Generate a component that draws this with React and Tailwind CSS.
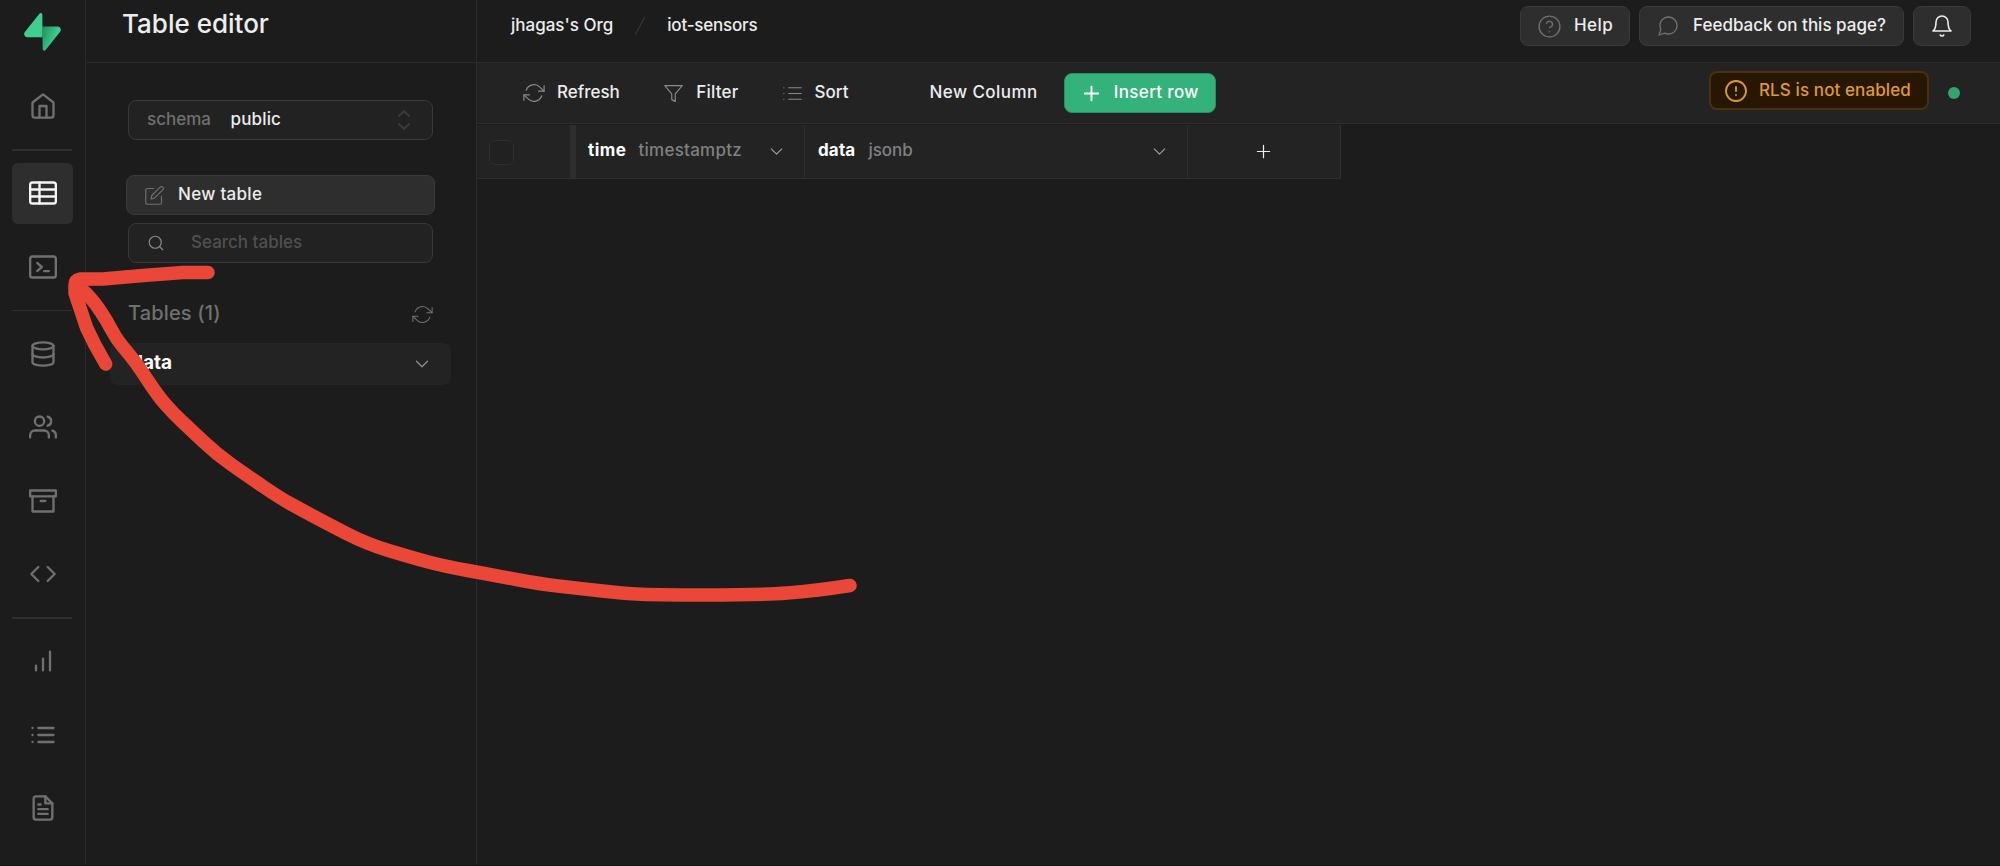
function Icon({ children, className = "", size = 28, sw = 2 }) {
  return (
    <svg width={size} height={size} viewBox="0 0 24 24" fill="none" stroke="currentColor" strokeWidth={sw} strokeLinecap="round" strokeLinejoin="round" className={`shrink-0 ${className}`}>
      {children}
    </svg>
  );
}

const glyphs = {
  home: <><path d="M3 9l9-7 9 7v11a2 2 0 0 1-2 2H5a2 2 0 0 1-2-2z" /><path d="M9 22V12h6v10" /></>,
  table: <><rect x="1" y="3" width="22" height="18" rx="2" /><path d="M1 9h22M1 15h22M9 3v18" /></>,
  terminal: <><rect x="1" y="3" width="22" height="18" rx="2" /><path d="M7 8.500l4 3.500-4 3.500M13 15.500h4" /></>,
  database: <><ellipse cx="12" cy="5" rx="9" ry="3" /><path d="M21 12c0 1.66-4 3-9 3s-9-1.34-9-3" /><path d="M3 5v14c0 1.66 4 3 9 3s9-1.34 9-3V5" /></>,
  users: <><path d="M17 21v-2a4 4 0 0 0-4-4H5a4 4 0 0 0-4 4v2" /><circle cx="9" cy="7" r="4" /><path d="M23 21v-2a4 4 0 0 0-3-3.87" /><path d="M16 3.13a4 4 0 0 1 0 7.75" /></>,
  archive: <><path d="M21 8v13H3V8" /><path d="M1 3h22v5H1z" /><path d="M10 12h4" /></>,
  code: <><path d="M16 18l6-6-6-6" /><path d="M8 6l-6 6 6 6" /></>,
  bars: <path d="M12 20V10M18 20V4M6 20v-4" />,
  list: <path d="M8 6h13M8 12h13M8 18h13M3 6h.01M3 12h.01M3 18h.01" />,
  file: <><path d="M14 2H6a2 2 0 0 0-2 2v16a2 2 0 0 0 2 2h12a2 2 0 0 0 2-2V8z" /><path d="M14 2v6h6M16 13H8M16 17H8M10 9H8" /></>,
  refresh: <><path d="M23 4v6h-6M1 20v-6h6" /><path d="M3.51 9a9 9 0 0 1 14.85-3.36L23 10M1 14l4.64 4.36A9 9 0 0 0 20.49 15" /></>,
  filter: <path d="M22 3H2l8 9.46V19l4 2v-8.54z" />,
  edit: <><path d="M11 4H4a2 2 0 0 0-2 2v14a2 2 0 0 0 2 2h14a2 2 0 0 0 2-2v-7" /><path d="M18.5 2.5a2.121 2.121 0 0 1 3 3L12 15l-4 1 1-4z" /></>,
  search: <><circle cx="11" cy="11" r="8" /><path d="M21 21l-4.35-4.35" /></>,
  down: <path d="M6 9l6 6 6-6" />,
  plus: <path d="M12 5v14M5 12h14" />,
  help: <><circle cx="12" cy="12" r="10" /><path d="M9.09 9a3 3 0 0 1 5.83 1c0 2-3 3-3 3M12 17h.01" /></>,
  message: <path d="M21 11.5a8.38 8.38 0 0 1-.9 3.8 8.5 8.5 0 0 1-7.6 4.7 8.38 8.38 0 0 1-3.8-.9L3 21l1.9-5.7a8.38 8.38 0 0 1-.9-3.8 8.5 8.5 0 0 1 4.7-7.6 8.38 8.38 0 0 1 3.8-.9h.5a8.48 8.48 0 0 1 8 8z" />,
  bell: <><path d="M18 8A6 6 0 0 0 6 8c0 7-3 9-3 9h18s-3-2-3-9" /><path d="M13.73 21a2 2 0 0 1-3.46 0" /></>,
  alert: <><circle cx="12" cy="12" r="10" /><path d="M12 8v4M12 16h.01" /></>,
};

function NavItem({ name, active }) {
  return (
    <div className={`flex h-[61px] w-[61px] shrink-0 items-center justify-center rounded-md pb-px pl-px ${active ? "bg-[#2e2e2e] text-[#f5f5f5]" : "text-[#707070]"}`}>
      <Icon>{glyphs[name]}</Icon>
    </div>
  );
}

function Sidebar() {
  return (
    <nav className="flex w-[86px] shrink-0 flex-col border-r border-[#2a2a2a] pl-3">
      <div className="flex h-[76px] shrink-0 pl-3 pt-[13px]">
        <svg width="37" height="38" viewBox="0 0 109 113" fill="none">
          <defs>
            <linearGradient id="bolt" x1="54" y1="55" x2="95" y2="72" gradientUnits="userSpaceOnUse">
              <stop stopColor="#249361" />
              <stop offset="1" stopColor="#3ecf8e" />
            </linearGradient>
          </defs>
          <path d="M63.7 110.3c-2.9 3.6-8.6 1.600-8.700-3L54 40.1h45.200c8.200 0 12.800 9.500 7.700 15.900z" fill="url(#bolt)" />
          <path d="M45.300 2.070c2.900-3.600 8.600-1.600 8.700 3L54.500 72.200H9.800c-8.200 0-12.800-9.500-7.700-15.900z" fill="#3ecf8e" />
        </svg>
      </div>
      <NavItem name="home" />
      <div className="my-3 h-0.5 w-[60px] shrink-0 bg-[#2e2e2e]" />
      <div className="flex flex-col gap-[12.5px]">
        <NavItem name="table" active />
        <NavItem name="terminal" />
        <div className="h-px w-[60px] bg-[#2e2e2e]" />
        <NavItem name="database" />
        <NavItem name="users" />
        <NavItem name="archive" />
        <NavItem name="code" />
        <div className="-mb-[0.5px] -mt-[0.5px] h-0.5 w-[60px] bg-[#2e2e2e]" />
        <NavItem name="bars" />
        <NavItem name="list" />
        <NavItem name="file" />
      </div>
    </nav>
  );
}

function TablePanel() {
  return (
    <aside className="flex w-[391px] shrink-0 flex-col border-r border-[#2a2a2a]">
      <div className="flex h-[63px] shrink-0 border-b border-[#2a2a2a] pl-9 pt-[7px]">
        <h1 className="text-[26px] leading-[33px] text-[#ededed]">Table editor</h1>
      </div>
      <div className="ml-[42px] mt-[37px] flex h-10 w-[305px] items-center rounded-lg border border-[#383838] bg-[#222222] pl-[18px] pr-[19px]">
        <span className="w-[83.5px] text-[#707070]">schema</span>
        <span className="flex-1 tracking-[0.15px] text-[#ededed]">public</span>
        <svg width="18" height="22" viewBox="0 0 18 22" fill="none" stroke="#3a3a3a" strokeWidth="2" strokeLinecap="round" strokeLinejoin="round">
          <path d="M4 7l5-5 5 5M4 15l5 5 5-5" />
        </svg>
      </div>
      <button className="ml-[40px] mt-[35px] flex h-10 w-[309px] items-center gap-[13px] rounded-lg border border-[#3a3a3a] bg-[#2e2e2e] pl-[17px] tracking-[0.3px] text-[#ededed]">
        <Icon size={21} sw={1.3} className="text-[#707070]">{glyphs.edit}</Icon>
        New table
      </button>
      <div className="ml-[42px] mt-2 flex h-10 w-[305px] items-center rounded-lg border border-[#383838] bg-[#222222] pl-[18px] text-[#505050]">
        <Icon size={18} sw={1.5} className="mr-[26px] text-[#8a8a8a]">{glyphs.search}</Icon>
        Search tables
      </div>
      <div className="mt-[34px] flex h-8 items-center justify-between pl-[42px] pr-[43px] text-[20px] tracking-[0.15px] text-[#707070]">
        Tables (1)
        <Icon size={21} sw={1.2} className="mt-0.5">{glyphs.refresh}</Icon>
      </div>
      <div className="ml-6 mt-[14px] flex h-[42px] w-[341px] items-center justify-between rounded-lg bg-[#232323] pl-[21px] pr-[18px] text-[19px] font-bold text-white">
        <span className="pb-0.5">data</span>
        <Icon size={22} sw={1.5} className="text-[#8a8a8a]">{glyphs.down}</Icon>
      </div>
    </aside>
  );
}

function TopBar() {
  return (
    <header className="flex h-[63px] shrink-0 items-start border-b border-[#2a2a2a] pl-[34px] pr-[29px] pt-1.5 text-[#ededed]">
      <div className="flex h-10 flex-1 items-center">
        <span>jhagas's Org</span>
        <svg width="10" height="18" viewBox="0 0 10 18" stroke="#3e3e3e" className="mx-[22px]"><path d="M0.500 17.500L9.500 0.500" /></svg>
        <span className="-tracking-[0.2px]">iot-sensors</span>
      </div>
      <div className="flex h-10 gap-[9px]">
        <button className="flex w-[110px] items-center gap-3 rounded-lg border border-[#3a3a3a] bg-[#2e2e2e] pl-4">
          <Icon size={25} sw={1.3} className="text-[#707070]">{glyphs.help}</Icon>
          <span className="tracking-[0.4px]">Help</span>
        </button>
        <button className="flex w-[265px] items-center gap-[13px] rounded-lg border border-[#3a3a3a] bg-[#2e2e2e] pl-4">
          <Icon size={24} sw={1.3} className="text-[#707070]">{glyphs.message}</Icon>
          <span>Feedback on this page?</span>
        </button>
        <button className="flex w-[58px] items-center justify-center rounded-lg border border-[#3a3a3a] bg-[#2e2e2e]">
          <Icon size={24} sw={1.6}>{glyphs.bell}</Icon>
        </button>
      </div>
    </header>
  );
}

function Toolbar() {
  return (
    <div className="flex h-[61px] shrink-0 items-start border-b border-[#2e2e2e] bg-[#232323] pl-[46px] text-[#ededed]">
      <div className="mt-[10px] flex h-10 flex-1 items-center">
        <Icon size={22} sw={1.3} className="mr-3 text-[#8a8a8a]">{glyphs.refresh}</Icon>
        <span>Refresh</span>
        <Icon size={21} sw={1.3} className="ml-[43px] mr-[12.5px] text-[#8a8a8a]">{glyphs.filter}</Icon>
        <span className="tracking-[0.2px]">Filter</span>
        <Icon size={23} sw={1.3} className="ml-[42px] mr-[11px] text-[#8a8a8a]">{glyphs.list}</Icon>
        <span>Sort</span>
        <span className="ml-[81px] tracking-[0.45px]">New Column</span>
        <button className="ml-[26px] flex h-10 w-[152px] items-center gap-[11px] rounded-lg border border-[#2c8f65] bg-[#34b27b] pl-[15px] text-white">
          <Icon size={23} sw={2}>{glyphs.plus}</Icon>
          <span className="tracking-[0.35px]">Insert row</span>
        </button>
      </div>
      <div className="mr-[71px] mt-2 flex h-[39px] w-[220px] items-center rounded-lg border-2 border-[#4d2f0b] bg-[#271700] pl-[13px] text-[#dd9a33]">
        <Icon size={24} sw={1.8} className="mr-[11px]">{glyphs.alert}</Icon>
        <span className="tracking-[0.1px]">RLS is not enabled</span>
      </div>
      <div className="-ml-[52px] mr-10 mt-6 h-3 w-3 rounded-full bg-[#34a36f]" />
    </div>
  );
}

function GridHeader() {
  return (
    <div className="mt-px flex h-[54px] w-[864px] border-b border-r border-[#2e2e2e] bg-[#232323]">
      <div className="flex w-[99px] items-center border-r-[6px] border-[#2e2e2e] pl-3">
        <div className="mt-0.5 h-[25px] w-[25px] rounded-md border border-[#2e2e2e] bg-[#212121]" />
      </div>
      <div className="flex w-[229px] items-center border-r border-[#2e2e2e] pl-3 pr-[17px]">
        <span className="mr-3 pb-px font-bold tracking-[0.5px] text-white">time</span>
        <span className="flex-1 pb-px tracking-[0.25px] text-[#808080]">timestamptz</span>
        <Icon size={21} sw={1.3} className="text-[#a0a0a0]">{glyphs.down}</Icon>
      </div>
      <div className="flex w-[383px] items-center border-r border-[#2e2e2e] pl-[13px] pr-[17px]">
        <span className="mr-[13px] pb-px font-bold tracking-[0.15px] text-white">data</span>
        <span className="flex-1 pb-px text-[#808080]">jsonb</span>
        <Icon size={21} sw={1.3} className="text-[#a0a0a0]">{glyphs.down}</Icon>
      </div>
      <div className="flex flex-1 items-center justify-center pr-px text-[#ededed]">
        <Icon size={21} sw={1.4}>{glyphs.plus}</Icon>
      </div>
    </div>
  );
}

const shaft = [
  [850, 585.5], [815, 591], [760, 595], [653, 595], [620, 593], [580, 588.5], [540, 584], [490, 574.5], [443, 566],
  [410, 557], [367, 544], [327, 523.5], [300, 509], [280, 498], [247, 475.5], [217, 454.5], [189, 428], [174, 414],
  [158, 396], [139, 367], [129, 354], [116, 338.5], [107, 321], [95, 303], [85, 292], [77, 286],
];

// Rounds a polyline by passing quadratic curves through its segment midpoints.
function smooth(points) {
  const [first, ...rest] = points;
  const last = rest[rest.length - 1];
  const curves = rest.slice(0, -1).map(([x, y], i) => `Q${x} ${y} ${(x + rest[i + 1][0]) / 2} ${(y + rest[i + 1][1]) / 2}`);
  return `M${first.join(" ")}${curves.join("")}L${last.join(" ")}`;
}

function Arrow() {
  return (
    <svg width="2000" height="866" viewBox="0 0 2000 866" fill="none" stroke="#ea4738" strokeWidth="13.5" strokeLinecap="round" strokeLinejoin="round" className="pointer-events-none absolute left-0 top-0">
      <path d={smooth(shaft)} />
      <path d="M208 272.500H183L140 275.700L103 279H80Q75 280 75 285V293L80.700 310L86.700 328L95 345L105.700 364" />
    </svg>
  );
}

export default function App() {
  return (
    <div className="relative flex h-[866px] w-[2000px] overflow-hidden border-b border-[#141012] bg-[#1c1c1c] font-['Inter',sans-serif] text-[17px] font-medium">
      <Sidebar />
      <TablePanel />
      <main className="flex min-w-0 flex-1 flex-col">
        <TopBar />
        <Toolbar />
        <GridHeader />
      </main>
      <Arrow />
    </div>
  );
}
